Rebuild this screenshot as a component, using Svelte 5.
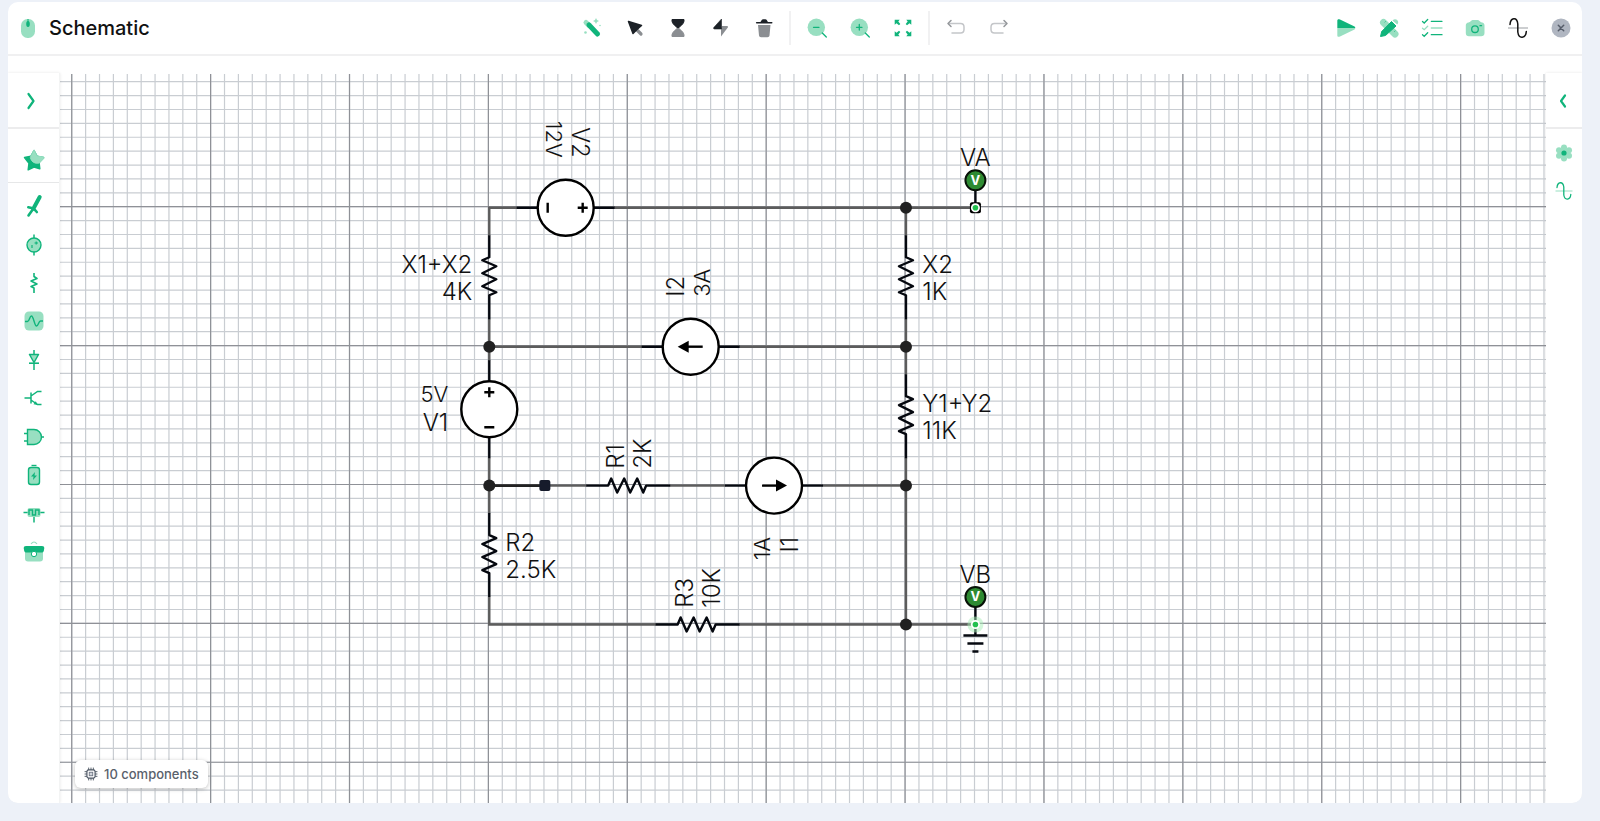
<script>
  const green = '#10b47b';
  const light = '#98dfc1';
  const dark = '#1c2127';
  const grey = '#8b8e92';

  // icon bodies, all drawn on a 24x24 box
  const icons = {
    mouse: `<rect x="5" y="3" width="14" height="19" rx="6.500" fill="${light}"/><path d="M12 3v4" stroke="${green}" stroke-width="1"/><ellipse cx="12" cy="8" rx="1.800" ry="3" fill="${green}"/>`,
    wand: `<path d="M6 6.500L9 9.500" stroke="${light}" stroke-width="5" stroke-linecap="round"/><path d="M9 9L17.500 18" stroke="${green}" stroke-width="5" stroke-linecap="round"/><path d="M16 2l1 2 2 1-2 1-1 2-1-2-2-1 2-1z" fill="${light}"/><circle cx="5.500" cy="16.500" r="1.300" fill="${light}"/><circle cx="20" cy="9.500" r=".8" fill="${light}"/>`,
    cursor: `<path d="M13.500 13.500l4.500 4.500" stroke="${grey}" stroke-width="3.200" stroke-linecap="round"/><path d="M5.500 5.500L18.500 9.500 14.500 13 10 17.500z" fill="${dark}" stroke="${dark}" stroke-width="1.500" stroke-linejoin="round"/>`,
    hourglass: `<path d="M6 3.500h12c.5 4-3 6-5 8h-2c-2-2-5.500-4-5-8z" fill="${dark}" stroke="${dark}" stroke-linejoin="round"/><path d="M6 20.500h12c.5-4-3-6-5-8h-2c-2 2-5.500 4-5 8z" fill="${grey}" stroke="${grey}" stroke-linejoin="round"/>`,
    bolt: `<path d="M13 10h5c1 0 1.300.8.8 1.500L12 20.500V13z" fill="${grey}"/><path d="M12.500 3v10H5.500c-1 0-1.200-.8-.7-1.500z" fill="${dark}" stroke="${dark}" stroke-width=".6" stroke-linejoin="round"/>`,
    trash: `<path d="M6 9h12.500l-1 10.500c-.2 1.200-1 1.700-2 1.700h-6.500c-1 0-1.800-.5-2-1.700z" fill="${grey}"/><path d="M4.700 6.800h15" stroke="${dark}" stroke-width="1.600" stroke-linecap="round"/><path d="M7.500 6.500c1.500 0 1.800-3.300 3.500-3.300h2.500c1.700 0 2 3.300 3.500 3.300z" fill="${dark}"/>`,
    zoomout: `<circle cx="11.300" cy="11.300" r="8.700" fill="${light}"/><path d="M17.300 17l4 4M8.500 11.300h5.500" stroke="${green}" stroke-width="1.300" stroke-linecap="round"/>`,
    zoomin: `<circle cx="11.300" cy="11.300" r="8.700" fill="${light}"/><path d="M17.300 17l4 4M8.500 11.300h5.500M11.300 8.500V14" stroke="${green}" stroke-width="1.300" stroke-linecap="round"/>`,
    expand: `<path d="M3.700 3.700h5L7.300 5.500l2 2.500-1.300 1.300-2.500-2-1.800 1.400zM20.300 3.700v5l-1.800-1.400-2.500 2L14.700 8l2-2.500-1.400-1.800zM3.700 20.300v-5l1.800 1.400 2.500-2L9.300 16l-2 2.500 1.400 1.800zM20.300 20.300h-5l1.400-1.800-2-2.500 1.300-1.300 2.500 2 1.800-1.400z" fill="${green}"/>`,
    undo: `<path d="M5 7.500h11.500q3.500 0 3.500 3.500v2.500q0 3.500-3.500 3.500H8" fill="none" stroke="#c4c6c9" stroke-width="1.500" stroke-linecap="round"/><path d="M7 4.500l-3 3 3 3" fill="none" stroke="#94979b" stroke-width="1.500" stroke-linecap="round" stroke-linejoin="round"/>`,
    redo: `<path d="M19 7.500H7.500Q4 7.500 4 11v2.500Q4 17 7.500 17H16" fill="none" stroke="#c4c6c9" stroke-width="1.500" stroke-linecap="round"/><path d="M17 4.500l3 3-3 3" fill="none" stroke="#94979b" stroke-width="1.500" stroke-linecap="round" stroke-linejoin="round"/>`,
    play: `<path d="M3.300 12h18c0 .8-.5 1.300-1.300 1.700L6 20.500c-1.700.8-2.700.2-2.700-1.200z" fill="${light}"/><path d="M3.300 12h18c0-.8-.5-1.300-1.300-1.700L6 3.500C4.300 2.700 3.300 3.300 3.300 4.700z" fill="${green}"/>`,
    design: `<path d="M6.500 6.500l11.500 11.500" stroke="${light}" stroke-width="7" stroke-linecap="round"/><path d="M15.500 4.500c1.800-2 4.800-1.500 5.500.8.500 1.600 0 2.400-.8 3.200z" fill="${light}"/><path d="M3.500 20.500l1.200-5L14.500 5.500l4.500 4.500L8.500 19.500z" fill="${green}" stroke="${green}" stroke-linejoin="round"/><path d="M9 5l-1.500 1.500M18.500 14.500L17 16" stroke="${green}" stroke-width="1" opacity=".5"/>`,
    checks: `<path d="M11.300 5.300H22M11.300 18.700H22M2.500 5.500l1.700 1.500 3.500-3.500M2.500 18.800l1.700 1.500 3.500-3.500" fill="none" stroke="${green}" stroke-width="1.300" stroke-linecap="round"/><path d="M11.300 12H22M2.500 12.200l1.700 1.500 3.500-3.500" fill="none" stroke="${light}" stroke-width="1.300" stroke-linecap="round"/>`,
    camera: `<path d="M5.500 6.500c2 0 2.500-2.500 4-2.500h5.500c1.500 0 2 2.500 4 2.500 1.700.2 2.500 1.300 2.500 3v7.500c0 2.200-1.300 3.300-3.300 3.300H6C4 20.300 2.800 19.200 2.800 17V9.500c0-1.700 1-2.800 2.700-3z" fill="${light}"/><circle cx="12" cy="13.200" r="3.300" fill="none" stroke="${green}" stroke-width="1.300"/><path d="M17 9.700h1.500" stroke="${green}" stroke-width="1.300" stroke-linecap="round"/>`,
    wave: `<path d="M2 12h20" stroke="#9a9da1" stroke-width="1.200"/><path d="M4 8.500C4.500 1.500 11 .5 11.800 8v8c1 7.500 8 6.500 8.500-.5" fill="none" stroke="#111" stroke-width="1.500" stroke-linecap="round"/>`,
    close: `<circle cx="12" cy="12" r="9.500" fill="#b0b6c1"/><path d="M9.300 9.300l5.400 5.400M14.700 9.300l-5.400 5.400" stroke="#555c69" stroke-width="1.500" stroke-linecap="round"/>`,
    right: `<path d="M9.500 5l5 7-5 7" fill="none" stroke="${green}" stroke-width="2.200" stroke-linecap="round" stroke-linejoin="round"/>`,
    left: `<path d="M14 6.500L10 12l4 5.500" fill="none" stroke="${green}" stroke-width="2.200" stroke-linecap="round" stroke-linejoin="round"/>`,
    star: `<path d="M12 2.500l3 5.700 6.500 1.300-4.500 4.700.8 6.600L12 19l-5.800 2.800.8-6.600L2.500 9.500 9 8.200z" fill="${green}" stroke="${green}" stroke-width="1.500" stroke-linejoin="round"/><path d="M12 2l3 6 6.800 1.200q.6.700 0 1.300L17.500 15Q10 16.500 8.300 9.500L9 8z" fill="${light}" stroke="${light}" stroke-width="1" stroke-linejoin="round"/>`,
    probe: `<path d="M17.700 3L12 13.500" stroke="${green}" stroke-width="4" stroke-linecap="round"/><path d="M12.500 13L6.500 21.500" stroke="${green}" stroke-width="2.600" stroke-linecap="round"/><path d="M6.300 13.300l3.200.7 3.500 2 1.800 2" fill="none" stroke="${green}" stroke-width="2.600" stroke-linecap="round"/>`,
    source: `<path d="M12 1.500v21" stroke="${green}" stroke-width="1.500"/><circle cx="12" cy="12" r="7" fill="${light}" stroke="${green}" stroke-width="1.400"/><path d="M10 12v3M12.500 10h3.500M14.200 8.500v3" stroke="${green}" stroke-width="1.200"/>`,
    resistor: `<path d="M12 2v3.500l3 2-6 2.500 6 3-6 2.500 3 1.500V22" fill="none" stroke="${green}" stroke-width="1.600" stroke-linejoin="round"/>`,
    signal: `<rect x="2.500" y="2.500" width="19" height="19" rx="4.500" fill="${light}"/><path d="M3 12.500h2.500C7.500 12.500 7.500 7 9.500 7s3 10 5 10 2-5 4-5H21" fill="none" stroke="${green}" stroke-width="1.400"/>`,
    diode: `<path d="M12 2v5M12 15v7" stroke="${green}" stroke-width="1.500"/><path d="M7.500 6.500h9L12 14.500z" fill="${light}" stroke="${green}" stroke-width="1.500" stroke-linejoin="round"/><path d="M7 15.200h10" stroke="${green}" stroke-width="1.600"/>`,
    transistor: `<path d="M2.500 12H9M9 6.500v11M9 10l6.500-4.500h4M9 14l6.500 4.500h4" fill="none" stroke="${green}" stroke-width="1.500"/><path d="M16 19l-4.500-.8 2.200-3z" fill="${green}"/>`,
    gate: `<path d="M2 8.500h4M2 16h4M18.500 12H22" stroke="${green}" stroke-width="1.400"/><path d="M5.500 4.500H12a7.500 7.500 0 0 1 0 15H5.500z" fill="${light}" stroke="${green}" stroke-width="1.400"/>`,
    battery: `<path d="M9.500 2.500h5" stroke="${green}" stroke-width="1.400"/><rect x="6.500" y="4.500" width="11" height="17" rx="2.500" fill="${light}" stroke="${green}" stroke-width="1.400"/><path d="M13 9l-4 4.500h2.500L11 17l4-4.500h-2.500z" fill="${green}"/>`,
    module: `<path d="M1.500 11.500h21M12 15v6.500" stroke="${green}" stroke-width="1.500"/><rect x="5.500" y="7" width="13" height="9" rx="2" fill="${light}"/><path d="M7 14V9h3.500v5h3V9H17v5" fill="none" stroke="${green}" stroke-width="1.400"/>`,
    toolbox: `<path d="M9 4q3-4 6 0" fill="none" stroke="${light}" stroke-width="1.200"/><path d="M3 12h18v6.500q0 3-3 3H6q-3 0-3-3z" fill="${light}"/><path d="M4 6h16q2.500 0 2.300 2l-.5 3q-.5 1.500-2 1.500H4.200q-1.500 0-2-1.500l-.5-3Q1.500 6 4 6z" fill="${green}"/><circle cx="12" cy="14" r="2.700" fill="#fff" stroke="${green}" stroke-width="1"/>`,
    gear: `<g fill="${light}"><circle cx="12" cy="6.500" r="3"/><circle cx="12" cy="17.500" r="3"/><circle cx="7" cy="9.300" r="3"/><circle cx="17" cy="9.300" r="3"/><circle cx="7" cy="14.700" r="3"/><circle cx="17" cy="14.700" r="3"/><circle cx="12" cy="12" r="5"/></g><circle cx="12" cy="12" r="2.600" fill="${green}"/>`,
    scope: `<path d="M3.500 12h17" stroke="${light}" stroke-width="1.200"/><path d="M5 8.500C5.500 2.500 11 2 11.800 8v8c1 6 6.500 5 7-.5" fill="none" stroke="${green}" stroke-width="1.300" stroke-linecap="round"/>`,
    chip: `<path d="M8 1v22M12 1v22M16 1v22M1 8h22M1 12h22M1 16h22" stroke="#59616b" stroke-width="1.700"/><rect x="5" y="5" width="14" height="14" rx="3" fill="#fff" stroke="#4b5563" stroke-width="2"/><rect x="9" y="9" width="6" height="6" fill="#d1d5db" stroke="#6b7280" stroke-width="1.500"/>`
  };

  const editTools = [
    ['wand', 'Tidy up'], ['cursor', 'Select'], ['hourglass', 'Flip vertical'],
    ['bolt', 'Rotate'], ['trash', 'Delete']
  ];
  const viewTools = [['zoomout', 'Zoom out'], ['zoomin', 'Zoom in'], ['expand', 'Fit to screen']];
  const historyTools = [['undo', 'Undo'], ['redo', 'Redo']];
  const sideTools = [
    ['play', 'Run'], ['design', 'Design'], ['checks', 'Checks'],
    ['camera', 'Snapshot'], ['wave', 'Waveforms'], ['close', 'Close']
  ];
  const palette = [
    ['probe', 'Probes'], ['source', 'Sources'], ['resistor', 'Passives'], ['signal', 'Signals'],
    ['diode', 'Diodes'], ['transistor', 'Transistors'], ['gate', 'Logic'], ['battery', 'Power'],
    ['module', 'Modules'], ['toolbox', 'Toolbox']
  ];

  // everything on the canvas snaps to this grid
  const cell = 13.889;
  const at = (x, y) => `translate(${x * cell} ${y * cell})`;

  // grid lines, far enough out to fill a large window
  function gridPath(step, from, to) {
    const a = from * cell;
    const b = to * cell;
    let d = '';
    for (let i = from; i <= to; i += step) {
      const p = (i * cell).toFixed(2);
      d += `M${p} ${a}V${b}M${a} ${p}H${b}`;
    }
    return d;
  }
  const minorGrid = gridPath(1, -40, 240);
  const majorGrid = gridPath(10, -40, 240);

  // wires run between the leads of the parts
  const wires = [
    'M0 2V0H2', 'M9 0H35', 'M0 8V11', 'M0 10H11', 'M18 10H30', 'M0 18V22',
    'M4 20H7', 'M13 20H17', 'M24 20H30', 'M0 28V30H12', 'M18 30H35',
    'M30 0V2', 'M30 8V12', 'M30 18V30'
  ].map((d) => d.replace(/\d+/g, (n) => n * cell));
  const nodes = [[30, 0], [0, 10], [30, 10], [0, 20], [30, 20], [30, 30]];

  const resistors = [
    { x: 0, y: 5, turn: 'rotate(90) scale(1 -1)' },
    { x: 30, y: 5, turn: 'rotate(90)' },
    { x: 30, y: 15, turn: 'rotate(90)' },
    { x: 0, y: 25, turn: 'rotate(90)' },
    { x: 10, y: 20, turn: '' },
    { x: 15, y: 30, turn: '' }
  ];
  const voltages = [{ x: 5.5, y: 0, turn: 0 }, { x: 0, y: 14.5, turn: -90 }];
  const currents = [{ x: 14.5, y: 10, turn: 180 }, { x: 20.5, y: 20, turn: 0 }];
  const probes = [{ x: 35, y: 0 }, { x: 35, y: 30, ground: true }];

  const labels = [
    { text: 'X1+X2', x: -17, y: 65, anchor: 'end' },
    { text: '4K', x: -17, y: 92, anchor: 'end' },
    { text: 'X2', x: 433, y: 65 },
    { text: '1K', x: 433, y: 92 },
    { text: 'Y1+Y2', x: 433, y: 204 },
    { text: '11K', x: 433, y: 231 },
    { text: 'R2', x: 16, y: 343 },
    { text: '2.5K', x: 16, y: 370 },
    { text: '5V', x: -41, y: 194, anchor: 'end', small: true },
    { text: 'V1', x: -41, y: 223, anchor: 'end' },
    { text: 'VA', x: 486, y: -42, anchor: 'middle' },
    { text: 'VB', x: 486, y: 375, anchor: 'middle' },
    { text: 'R1', x: 135, y: 261, turn: -90 },
    { text: '2K', x: 162, y: 261, turn: -90 },
    { text: 'R3', x: 204, y: 400, turn: -90 },
    { text: '10K', x: 231, y: 400, turn: -90 },
    { text: 'I2', x: 195, y: 89, turn: -90 },
    { text: '3A', x: 221, y: 89, turn: -90, small: true },
    { text: '1A', x: 281, y: 329, turn: -90, anchor: 'end', small: true },
    { text: 'I1', x: 309, y: 329, turn: -90, anchor: 'end' },
    { text: 'V2', x: 83, y: -50, turn: 90, anchor: 'end' },
    { text: '12V', x: 57, y: -50, turn: 90, anchor: 'end', small: true }
  ];
</script>

{#snippet icon(name)}
  <svg class="icon" viewBox="0 0 24 24" aria-hidden="true">{@html icons[name]}</svg>
{/snippet}

{#snippet tools(list)}
  {#each list as [name, label]}
    <button class="tool" aria-label={label}>{@render icon(name)}</button>
  {/each}
{/snippet}

<div class="app">
  <main class="window">
    <header class="bar">
      <div class="title">
        {@render icon('mouse')}
        <h1>Schematic</h1>
      </div>
      <div class="group">
        {@render tools(editTools)}
        <span class="divider"></span>
        {@render tools(viewTools)}
        <span class="divider"></span>
        {@render tools(historyTools)}
      </div>
      <div class="group end">
        {@render tools(sideTools)}
      </div>
    </header>

    <div class="workspace">
      <nav class="rail">
        <button class="toggle" aria-label="Expand parts">{@render icon('right')}</button>
        <button class="favourites" aria-label="Favourites">{@render icon('star')}</button>
        <div class="palette">
          {#each palette as [name, label]}
            <button aria-label={label}>{@render icon(name)}</button>
          {/each}
        </div>
      </nav>

      <section class="canvas">
        <svg class="sheet">
          <g transform="translate(428.400 132.700)">
            <path class="grid" d={minorGrid} />
            <path class="grid major" d={majorGrid} />
          </g>

          <g transform="translate(429.300 133.800)">
            {#each wires as d}
              <path class="wire" {d} />
            {/each}
            <line class="wire picked" x1="0" y1={20 * cell} x2={4 * cell} y2={20 * cell} />

            {#each resistors as r}
              <g transform="{at(r.x, r.y)} {r.turn}">
                <path class="part" d="M-42 0H-20L-17 -7 -11 7 -4 -7 2 7 9 -7 15 7 18 0H42" />
              </g>
            {/each}

            {#each voltages as v}
              <g transform="{at(v.x, v.y)} rotate({v.turn})">
                <path class="part" d="M-49 0H49" />
                <circle class="body" r="28" />
                <path class="mark" d="M-18 -5V5M12 0H22M17 -5V5" />
              </g>
            {/each}

            {#each currents as c}
              <g transform="{at(c.x, c.y)} rotate({c.turn})">
                <path class="part" d="M-49 0H49" />
                <circle class="body" r="28" />
                <path class="mark" d="M-12 0H4" />
                <path d="M2 -6L13 0 2 6z" />
              </g>
            {/each}

            {#each nodes as [x, y]}
              <circle cx={x * cell} cy={y * cell} r="6" fill="#212121" />
            {/each}
            <rect x={4 * cell - 5.5} y={20 * cell - 5.5} width="11" height="11" rx="2" fill="#161b2b" />

            {#each probes as p}
              <g transform={at(p.x, p.y)}>
                <path class="part" d="M0 -18V0" />
                <circle cy="-27.500" r="10" fill="#2e8b32" stroke="#081208" stroke-width="2" />
                <text class="letter" y="-23">V</text>
                {#if p.ground}
                  <path class="part" d="M0 0V11M-12 11H12M-8 19H8M-3 27H3" />
                  <circle r="8" fill="#a8efb8" opacity=".5" />
                {:else}
                  <rect x="-5.500" y="-5.500" width="11" height="11" rx="2" />
                {/if}
                <circle r="4.500" fill="#fff" />
                <circle r="2.800" fill="#22c04e" />
              </g>
            {/each}

            {#each labels as l}
              <text
                class="label"
                class:small={l.small}
                text-anchor={l.anchor ?? 'start'}
                transform="translate({l.x} {l.y}) rotate({l.turn ?? 0})">{l.text}</text>
            {/each}
          </g>
        </svg>

        <div class="count">
          {@render icon('chip')}
          <span>10 components</span>
        </div>
      </section>

      <aside class="rail narrow">
        <button class="toggle" aria-label="Expand properties">{@render icon('left')}</button>
        <div class="panels">
          <button aria-label="Settings">{@render icon('gear')}</button>
          <button aria-label="Scope">{@render icon('scope')}</button>
        </div>
      </aside>
    </div>
  </main>
</div>

<style>
  :global(body) {
    margin: 0;
    background: #edf1f8;
  }

  .app {
    display: flex;
    box-sizing: border-box;
    min-height: 100vh;
    padding: 2px 18px 18px 8px;
    font-family: Inter, 'Liberation Sans', sans-serif;
  }

  .window {
    flex: 1;
    display: flex;
    flex-direction: column;
    background: #fff;
    border-radius: 10px;
    overflow: hidden;
  }

  .bar {
    display: grid;
    grid-template-columns: 1fr auto 1fr;
    align-items: center;
    height: 52px;
    border-bottom: 2px solid #f0f0f1;
  }

  .title {
    display: flex;
    align-items: center;
    gap: 9px;
    padding-left: 8px;
  }

  h1 {
    margin: 0;
    font-size: 20px;
    font-weight: 500;
    line-height: 24px;
    color: #111;
  }

  .group {
    display: flex;
    align-items: center;
  }

  .end {
    justify-content: flex-end;
  }

  button {
    display: flex;
    align-items: center;
    justify-content: center;
    padding: 0;
    border: 0;
    background: none;
    cursor: pointer;
  }

  .tool {
    width: 43px;
    height: 40px;
  }

  .icon {
    display: block;
    flex: none;
    width: 24px;
    height: 24px;
  }

  .divider {
    width: 2px;
    height: 34px;
    margin: 0 4px;
    background: #f1f1f2;
  }

  .workspace {
    flex: 1;
    display: flex;
    margin-top: 17px;
  }

  .rail {
    position: relative;
    z-index: 1;
    width: 51px;
    background: #fff;
    border-right: 1px solid #f3f4f4;
    box-shadow: 0 0 3px rgba(0, 0, 0, 0.1);
  }

  .narrow {
    width: 36px;
    border-right: 0;
  }

  .toggle {
    width: 100%;
    height: 56px;
    padding: 2px 2px 0 0;
    border-bottom: 2px solid #ececed;
  }

  .rail:not(.narrow) .toggle {
    padding-right: 5px;
  }

  .favourites {
    width: 100%;
    height: 54px;
    padding-top: 8px;
    border-bottom: 1px solid #e6e7e8;
  }

  .palette {
    display: grid;
    grid-auto-rows: 1fr;
    justify-content: center;
    height: 384px;
    padding-top: 4px;
  }

  .panels {
    display: grid;
    grid-auto-rows: 38px;
    justify-content: center;
    padding-top: 5px;
  }

  .canvas {
    position: relative;
    flex: 1;
    display: flex;
    margin-top: 1px;
    min-height: 600px;
  }

  .sheet {
    display: block;
    flex: 1;
    min-width: 0;
    height: auto;
    overflow: hidden;
  }

  .grid {
    fill: none;
    stroke: #c9cdd2;
    stroke-width: 1.200;
  }

  .major {
    stroke: #8f9197;
  }

  .wire {
    fill: none;
    stroke: #5c5c5c;
    stroke-width: 2.400;
  }

  .picked {
    stroke: #222;
    stroke-width: 2.600;
  }

  .part {
    fill: none;
    stroke: #05080f;
    stroke-width: 2.400;
    stroke-linejoin: round;
  }

  .body {
    fill: #fff;
    stroke: #000;
    stroke-width: 2.400;
  }

  .mark {
    fill: none;
    stroke: #000;
    stroke-width: 2.400;
  }

  .label {
    font-size: 24px;
    font-weight: 350;
    fill: #111;
  }

  .small {
    font-size: 22px;
  }

  .letter {
    font-size: 13px;
    font-weight: 700;
    text-anchor: middle;
    fill: #fff;
  }

  .count {
    position: absolute;
    left: 15px;
    bottom: 15px;
    display: flex;
    align-items: center;
    gap: 6px;
    height: 28px;
    padding: 0 9px;
    border-radius: 6px;
    background: #fff;
    box-shadow: 0 1px 4px rgba(0, 0, 0, 0.25);
    color: #59616b;
    font-size: 13px;
    font-weight: 500;
  }

  .count .icon {
    width: 14px;
    height: 14px;
  }
</style>
